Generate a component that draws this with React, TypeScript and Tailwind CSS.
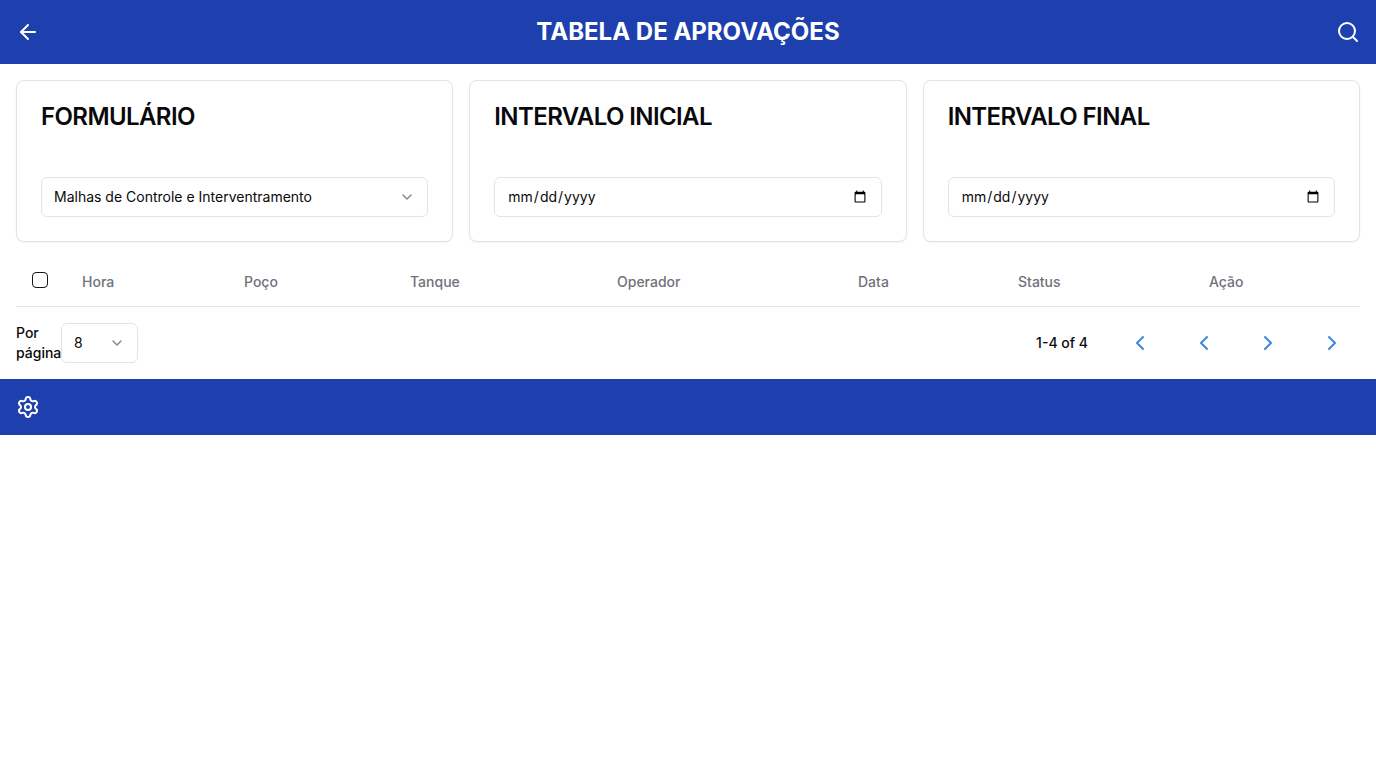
import React from "react";
import { ArrowLeft, Search, ChevronDown, ChevronLeft, ChevronRight, Settings } from "lucide-react";

const columns = [
  { label: "Hora", width: "w-[162px]" },
  { label: "Poço", width: "w-[166px]" },
  { label: "Tanque", width: "w-[207px]" },
  { label: "Operador", width: "w-[241px]" },
  { label: "Data", width: "w-[160px]" },
  { label: "Status", width: "w-[191px]" },
  { label: "Ação", width: "" },
];

const pagerButtons = [
  { label: "Primeira página", Icon: ChevronLeft },
  { label: "Página anterior", Icon: ChevronLeft },
  { label: "Próxima página", Icon: ChevronRight },
  { label: "Última página", Icon: ChevronRight },
];

const field = "h-10 w-full rounded-md border border-zinc-200 bg-white px-3 py-2 text-sm";

function Card({ title, id, children }: { title: string; id: string; children: React.ReactNode }) {
  return (
    <section className="rounded-lg border border-zinc-200 bg-white shadow-[0_1px_2px_0_rgb(0_0_0/0.05)]">
      <div className="p-6">
        <h2 className="text-2xl font-semibold leading-6 tracking-tight">
          <label htmlFor={id}>{title}</label>
        </h2>
      </div>
      <div className="p-6">{children}</div>
    </section>
  );
}

function Select({ id, options }: { id: string; options: string[] }) {
  return (
    <div className="grid items-center">
      <select id={id} className={`${field} col-start-1 row-start-1 appearance-none`}>
        {options.map((option) => (
          <option key={option}>{option}</option>
        ))}
      </select>
      <ChevronDown className="pointer-events-none col-start-1 row-start-1 mr-[13px] size-4 justify-self-end opacity-50" />
    </div>
  );
}

export default function App() {
  return (
    <div className="bg-white font-['Inter',sans-serif] text-zinc-950">
      <header className="flex h-16 items-center justify-between bg-[#1e40af] px-4 text-white">
        <button type="button" aria-label="Voltar">
          <ArrowLeft className="size-6" />
        </button>
        <h1 className="text-2xl font-bold">TABELA DE APROVAÇÕES</h1>
        <button type="button" aria-label="Buscar">
          <Search className="size-6" />
        </button>
      </header>

      <main className="p-4">
        <div className="mb-4 grid grid-cols-3 gap-4">
          <Card title="FORMULÁRIO" id="form">
            <Select id="form" options={["Malhas de Controle e Interventramento"]} />
          </Card>
          <Card title="INTERVALO INICIAL" id="start">
            <input id="start" type="date" className={field} />
          </Card>
          <Card title="INTERVALO FINAL" id="end">
            <input id="end" type="date" className={field} />
          </Card>
        </div>

        <table className="w-full table-fixed text-sm">
          <thead>
            <tr className="h-12 border-b border-zinc-200 text-left text-zinc-500">
              <th className="w-[50px] px-4 pb-1">
                <input
                  type="checkbox"
                  aria-label="Selecionar todos"
                  className="block size-4 appearance-none rounded-sm border border-zinc-900 checked:bg-zinc-900"
                />
              </th>
              {columns.map(({ label, width }) => (
                <th key={label} className={`${width} px-4 font-medium`}>
                  {label}
                </th>
              ))}
            </tr>
          </thead>
        </table>

        <div className="mt-4 flex items-center justify-between text-sm font-medium">
          <div className="flex items-center">
            <label htmlFor="per-page" className="w-[45px]">
              Por página
            </label>
            <div className="w-[77px] font-normal">
              <Select id="per-page" options={["8", "16", "32"]} />
            </div>
          </div>
          <div className="flex items-center gap-2">
            <span className="mr-4">1-4 of 4</span>
            {pagerButtons.map(({ label, Icon }) => (
              <button key={label} type="button" aria-label={label} className="flex h-10 w-14 items-center justify-center text-[#4285d9]">
                <Icon className="size-6" />
              </button>
            ))}
          </div>
        </div>
      </main>

      <footer className="flex h-14 items-center bg-[#1e40af] px-4 text-white">
        <button type="button" aria-label="Configurações">
          <Settings className="size-6" />
        </button>
      </footer>
    </div>
  );
}
